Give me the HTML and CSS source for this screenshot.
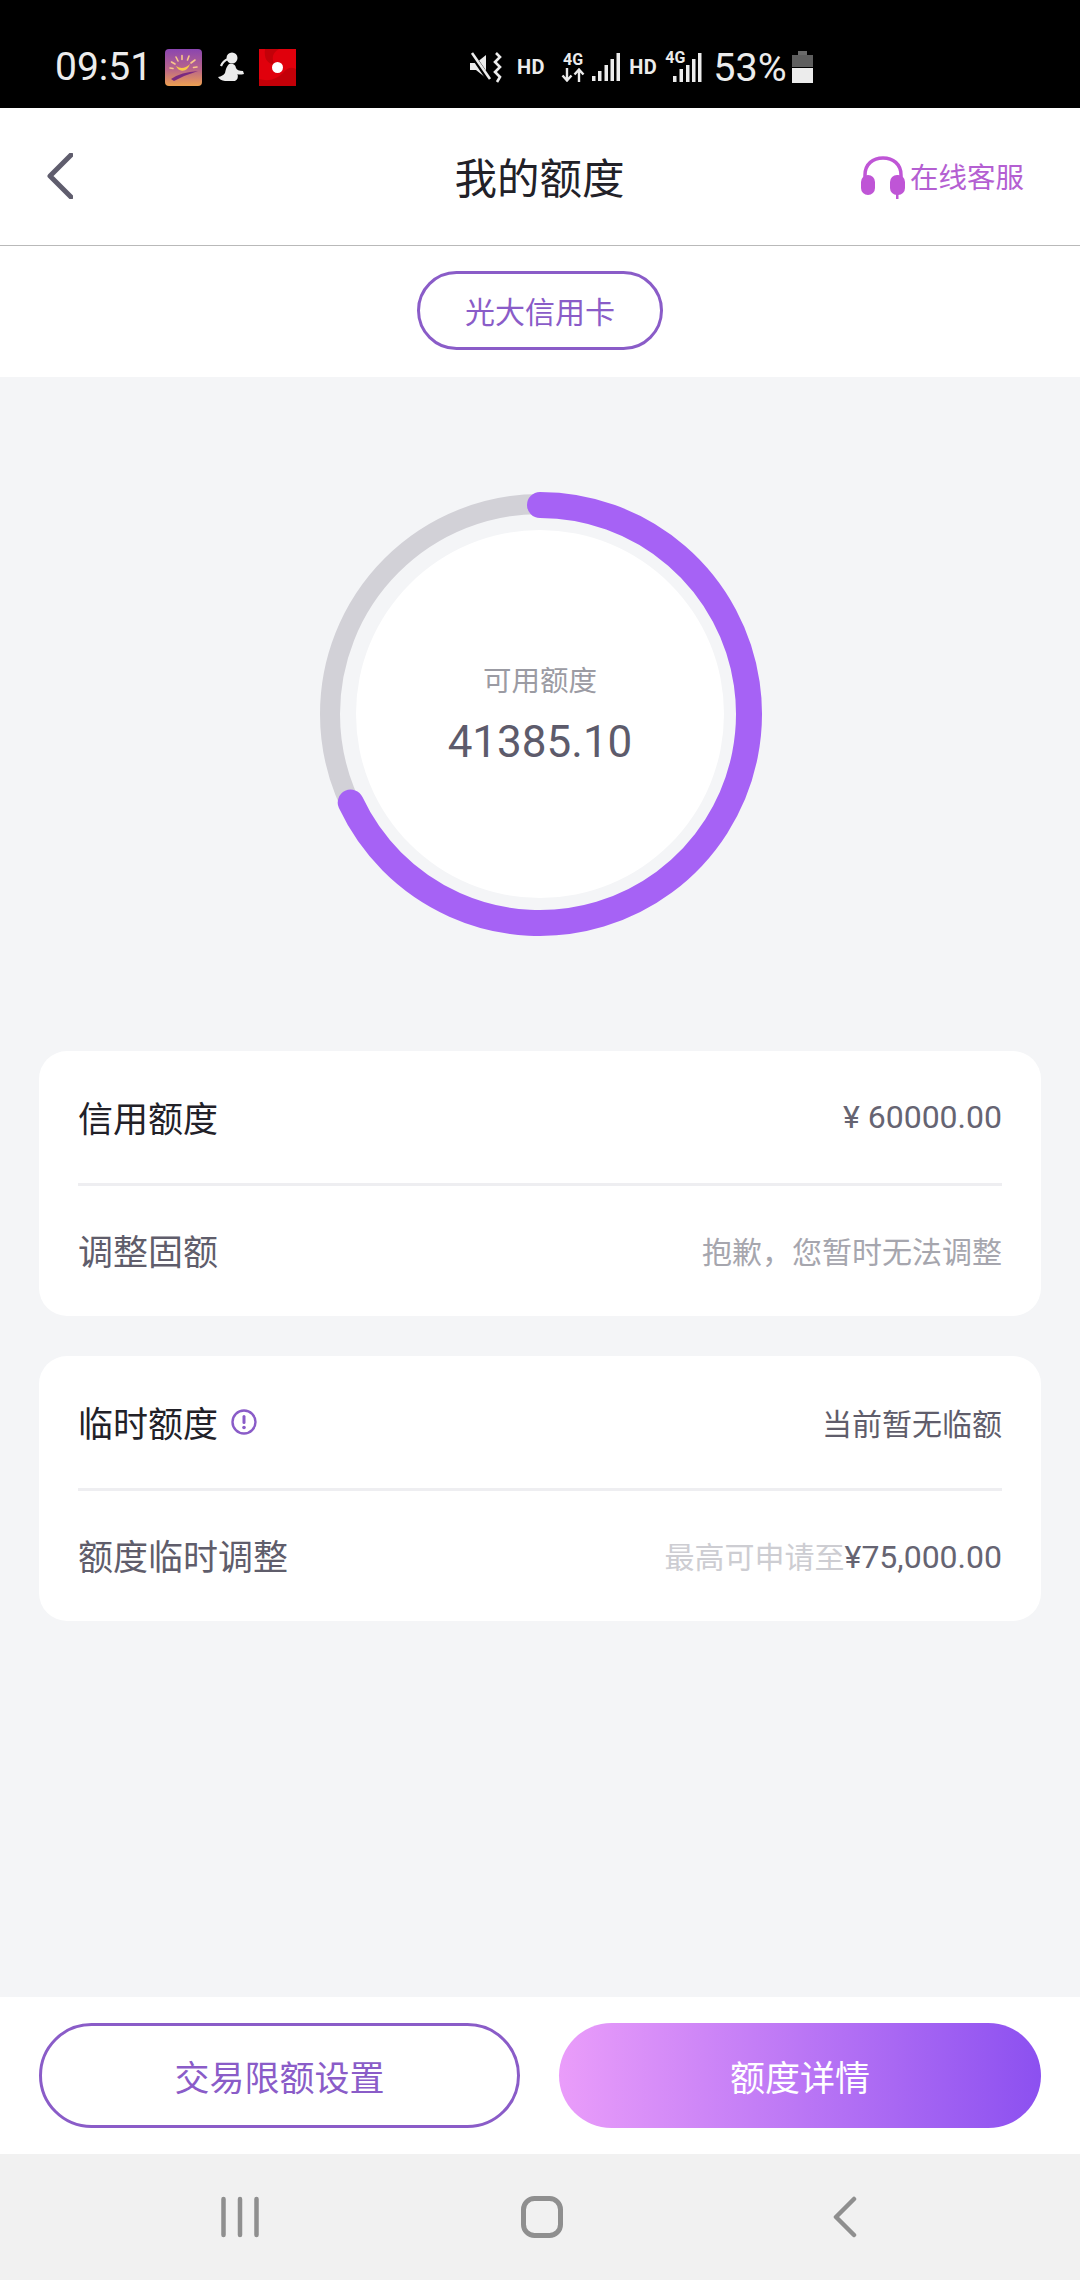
FILE: index.html
```html
<!DOCTYPE html>
<html lang="zh-CN">
<head>
  <meta charset="UTF-8" />
  <meta name="viewport" content="width=device-width, initial-scale=1.0" />
  <title>我的额度</title>
  <link rel="stylesheet" href="styles.css">
</head>
<body>
  <div class="status-bar">
    <div class="status-left">
      <span class="clock">09:51</span>
      <svg class="app-icon" viewBox="0 0 37 37">
        <defs>
          <linearGradient id="sunset" x1="0" y1="0" x2="0" y2="1">
            <stop offset="0" stop-color="#8a45b0"/>
            <stop offset="0.55" stop-color="#b9658a"/>
            <stop offset="1" stop-color="#eda050"/>
          </linearGradient>
        </defs>
        <rect width="37" height="37" rx="4" fill="url(#sunset)"/>
        <path d="M11 17 Q18 22 25 15 Q22 23 16 21.5 Q13 21 11 17Z" fill="#f8c94a"/>
        <path d="M6 30 Q16 23 33 22 Q20 26 9 32Z" fill="#7a2a80"/>
        <g stroke="#f9c78a" stroke-width="1.6" stroke-linecap="round">
          <path d="M17 6.500V10.500M11 8L13 12M24 7L22.500 11M6.500 13L10 15M30 11L26 14M5 19L8 19.500M32 18L28.500 18.500"/>
        </g>
      </svg>
      <svg class="runner-icon" viewBox="0 0 26 30">
        <circle cx="14" cy="6" r="5.500" fill="#ececec"/>
        <path d="M10 7 Q5 9 3 14" stroke="#ececec" stroke-width="2.200" fill="none"/>
        <path d="M11 12 Q17 11 18 16 Q19 19 25 19 L26 22 Q21 23 19.500 22 Q21 27 17 29 L7 29 Q2 28.500 0 25 Q5 24 7 21 Q8 15 11 12Z" fill="#ececec"/>
      </svg>
      <svg class="app-icon" viewBox="0 0 37 37">
        <rect width="37" height="37" fill="#e0000c"/>
        <path d="M0 30 Q14 34 24 24 Q30 16 37 20 V37 H0Z" fill="#c30008"/>
        <path d="M6 0 Q4 14 16 16 Q10 6 20 0Z" fill="#c30008"/>
        <circle cx="18.500" cy="18.500" r="5.500" fill="#fff"/>
      </svg>
    </div>
    <div class="status-right">
      <svg class="mute-icon" viewBox="0 0 32 31">
        <path d="M0 11H6L16 3V26L6 18H0Z" fill="#ececec"/>
        <path d="M1 1L20 29" stroke="#000" stroke-width="5"/>
        <path d="M2 1L20 27" stroke="#ececec" stroke-width="2.600"/>
        <path d="M26 1 L30 5 L25 10 L30 15 L25 20 L30 25 L27 30" stroke="#ececec" stroke-width="2.600" fill="none"/>
      </svg>
      <span class="hd first-hd">HD</span>
      <span class="net">
        <span class="net-label">4G</span>
        <svg class="net-arrows" viewBox="0 0 24 14">
          <path d="M6 0V12M1.500 7.500L6 12.500L10.500 7.500M18 14V2M13.500 6.500L18 1.500L22.500 6.500" stroke="#ececec" stroke-width="2.400" fill="none"/>
        </svg>
      </span>
      <svg class="signal" viewBox="0 0 28 28">
        <rect x="0" y="23" width="3.500" height="5" fill="#ececec"/>
        <rect x="6" y="18" width="3.500" height="10" fill="#ececec"/>
        <rect x="12.500" y="12" width="3.500" height="16" fill="#ececec"/>
        <rect x="18.500" y="6" width="3.500" height="22" fill="#ececec"/>
        <rect x="24.500" y="0" width="3.500" height="28" fill="#ececec"/>
      </svg>
      <span class="hd second-hd">HD</span>
      <span class="net-signal">
        <span class="net-label tiny">4G</span>
        <svg class="signal wide" viewBox="0 0 37 30">
          <rect x="8" y="24" width="3.500" height="6" fill="#ececec"/>
          <rect x="14.500" y="17" width="3.500" height="13" fill="#ececec"/>
          <rect x="21" y="13" width="3.500" height="17" fill="#ececec"/>
          <rect x="27" y="7" width="3.500" height="23" fill="#ececec"/>
          <rect x="33" y="1" width="3.500" height="29" fill="#ececec"/>
        </svg>
      </span>
      <span class="battery-text">53%</span>
      <svg class="battery" viewBox="0 0 21 32">
        <rect x="6" y="0" width="9" height="4" fill="#6a6a6a"/>
        <rect x="0" y="4" width="21" height="12" fill="#5e5e5e"/>
        <rect x="0" y="17" width="21" height="15" fill="#ececec"/>
      </svg>
    </div>
  </div>

  <header class="app-header">
    <svg class="back-icon" viewBox="0 0 26 46">
      <path d="M24 2L3 23L24 44" stroke="#5f5d6d" stroke-width="5" fill="none" stroke-linecap="round" stroke-linejoin="round"/>
    </svg>
    <h1 class="page-title">我的额度</h1>
    <div class="service">
      <svg class="headset" viewBox="0 0 46 44">
        <path d="M5 24V20C5 9 13 3 23 3C33 3 41 9 41 20V24" stroke="#bf55d6" stroke-width="3.500" fill="none"/>
        <rect x="1" y="20" width="14" height="20" rx="7" fill="#bf55d6"/>
        <rect x="30" y="20" width="15" height="20" rx="7" fill="#bf55d6"/>
        <rect x="36" y="38" width="2.500" height="6" fill="#bf55d6"/>
      </svg>
      <span>在线客服</span>
    </div>
  </header>

  <div class="card-tabs">
    <span class="card-pill">光大信用卡</span>
  </div>

  <main class="content">
    <div class="gauge">
      <svg class="gauge-ring" viewBox="0 0 446 446">
        <circle cx="223" cy="223" r="210" fill="none" stroke="#d2d1d7" stroke-width="20"/>
        <circle cx="223" cy="223" r="184" fill="#fff"/>
        <path d="M223 14 A209 209 0 1 1 33.700 311.600" fill="none" stroke="#a662f5" stroke-width="26" stroke-linecap="round"/>
      </svg>
      <div class="gauge-text">
        <span class="gauge-label">可用额度</span>
        <span class="gauge-value">41385.10</span>
      </div>
    </div>

    <section class="panel">
      <div class="row">
        <span class="row-title">信用额度</span>
        <span class="row-amount">¥ 60000.00</span>
      </div>
      <div class="row">
        <span class="row-title soft">调整固额</span>
        <span class="row-note">抱歉，您暂时无法调整</span>
      </div>
    </section>

    <section class="panel">
      <div class="row">
        <span class="row-title">临时额度
          <svg class="info-icon" viewBox="0 0 26 26">
            <circle cx="13" cy="13" r="11.500" stroke="#8a5cc8" stroke-width="2.400" fill="none"/>
            <rect x="11.500" y="6" width="3" height="9" rx="1.500" fill="#8a5cc8"/>
            <circle cx="13" cy="18.500" r="1.800" fill="#8a5cc8"/>
          </svg>
        </span>
        <span class="row-status">当前暂无临额</span>
      </div>
      <div class="row">
        <span class="row-title soft">额度临时调整</span>
        <span class="row-limit">最高可申请至<b>¥75,000.00</b></span>
      </div>
    </section>
  </main>

  <footer class="actions">
    <button class="btn btn-outline">交易限额设置</button>
    <button class="btn btn-fill">额度详情</button>
  </footer>

  <nav class="nav-bar">
    <svg class="nav-recent" viewBox="0 0 38 42">
      <path d="M2.500 3V39M19 3V39M35.500 3V39" stroke="#8f8f8f" stroke-width="4.500" stroke-linecap="round"/>
    </svg>
    <svg class="nav-home" viewBox="0 0 42 42">
      <rect x="2.500" y="2.500" width="37" height="37" rx="11" stroke="#8f8f8f" stroke-width="5" fill="none"/>
    </svg>
    <svg class="nav-back" viewBox="0 0 24 42">
      <path d="M21 3L3 21L21 39" stroke="#8f8f8f" stroke-width="4.500" fill="none" stroke-linecap="round" stroke-linejoin="round"/>
    </svg>
  </nav>
</body>
</html>
```

FILE: styles.css
```css
* {
  margin: 0;
  padding: 0;
  box-sizing: border-box;
}

body {
  width: 1080px;
  height: 2280px;
  display: flex;
  flex-direction: column;
  overflow: hidden;
  background: #f4f5f7;
  font-family: "Noto Sans CJK SC", "Noto Sans", sans-serif;
  font-weight: 400;
}

svg {
  display: block;
  flex-shrink: 0;
}

/* status bar */
.status-bar {
  height: 108px;
  background: #000;
  color: #ececec;
  display: flex;
  align-items: center;
  padding: 26px 0 0 55px;
  font-family: Roboto, sans-serif;
}

.status-left {
  display: flex;
  align-items: center;
  width: 415px;
}

.clock {
  font-size: 39px;
  width: 110px;
  font-weight: 400;
}

.app-icon {
  width: 37px;
  height: 37px;
}

.runner-icon {
  width: 26px;
  height: 30px;
  margin: 0 15px 0 16px;
}

.status-right {
  display: flex;
  align-items: center;
}

.mute-icon {
  width: 32px;
  height: 31px;
}

.hd {
  font-size: 20px;
  font-weight: 700;
  letter-spacing: 0.5px;
}

.first-hd {
  margin: 0 16px 0 15px;
}

.second-hd {
  margin: 0 8px 0 9px;
}

.net {
  display: flex;
  flex-direction: column;
  align-items: center;
  width: 24px;
  margin-right: 7px;
  gap: 1px;
}

.net-label {
  font-size: 16px;
  font-weight: 700;
  line-height: 14px;
}

.net-arrows {
  width: 24px;
  height: 14px;
}

.signal {
  width: 28px;
  height: 28px;
}

.net-signal {
  display: flex;
  position: relative;
  width: 37px;
  height: 30px;
}

.signal.wide {
  width: 37px;
  height: 30px;
}

.net-label.tiny {
  position: absolute;
  left: 0;
  top: -1px;
}

.battery-text {
  font-size: 39.500px;
  font-weight: 400;
  margin: 0 5px 0 11px;
}

.battery {
  width: 21px;
  height: 32px;
}

/* header */
.app-header {
  height: 138px;
  background: #fff;
  border-bottom: 1px solid #b9b9b9;
  display: flex;
  align-items: center;
  padding: 0 56px 0 47px;
}

.back-icon {
  width: 26px;
  height: 46px;
  margin-top: -2px;
}

.page-title {
  flex: 1;
  text-align: center;
  font-size: 42.500px;
  font-weight: 400;
  color: #222128;
  padding-left: 146px;
  margin-top: -2px;
}

.service {
  display: flex;
  align-items: center;
  font-size: 28.500px;
  color: #b45fd2;
  gap: 4px;
}

.service span {
  margin-top: -2px;
}

.headset {
  width: 46px;
  height: 44px;
}

.card-tabs {
  height: 131px;
  background: #fff;
  display: flex;
  justify-content: center;
  align-items: center;
  padding-bottom: 3px;
}

.card-pill {
  width: 246px;
  height: 79px;
  border: 3px solid #8a5cc8;
  border-radius: 40px;
  font-size: 30px;
  color: #8a5cc8;
  display: flex;
  align-items: center;
  justify-content: center;
}

/* main */
.content {
  flex: 1;
  padding: 0 39px;
}

.gauge {
  display: grid;
  justify-content: center;
  align-items: center;
  padding-top: 114px;
  margin-bottom: 114px;
}

.gauge-ring {
  grid-area: 1 / 1;
  width: 446px;
  height: 446px;
}

.gauge-text {
  grid-area: 1 / 1;
  display: flex;
  flex-direction: column;
  align-items: center;
}

.gauge-label {
  font-size: 28.500px;
  color: #9b9ba3;
  line-height: 40px;
  margin-top: -2px;
}

.gauge-value {
  font-family: Roboto, sans-serif;
  font-weight: 400;
  font-size: 44px;
  color: #5d5b6b;
  line-height: 52px;
  margin-top: 17px;
}

.panel {
  background: #fff;
  border-radius: 28px;
  padding: 0 39px;
  margin-bottom: 40px;
}

.row {
  height: 132px;
  display: flex;
  justify-content: space-between;
  align-items: center;
  padding-bottom: 1px;
}

.row + .row {
  height: 133px;
  padding-bottom: 3px;
  border-top: 3px solid #eeeef1;
}

.row-title {
  font-size: 35px;
  color: #222128;
  display: flex;
  align-items: center;
  gap: 13px;
}

.row-title.soft {
  color: #5f5d6b;
}

.info-icon {
  width: 26px;
  height: 26px;
}

.row-amount {
  font-family: Roboto, sans-serif;
  font-weight: 400;
  font-size: 32px;
  color: #666472;
}

.row-note {
  font-size: 30px;
  color: #a6a6ae;
}

.row-status {
  font-size: 30px;
  color: #5f5d6b;
}

.row-limit {
  font-size: 30px;
  color: #cdcdd2;
}

.row-limit b {
  font-family: Roboto, sans-serif;
  font-weight: 400;
  font-size: 32px;
  color: #666472;
}

/* bottom */
.actions {
  height: 157px;
  background: #fff;
  display: flex;
  justify-content: space-between;
  padding: 26px 39px 0;
}

.btn {
  height: 105px;
  border-radius: 53px;
  font-family: inherit;
  font-weight: 400;
  font-size: 35px;
}

.btn-outline {
  width: 481px;
  background: #fff;
  border: 3px solid #8a5cc8;
  color: #8a5cc8;
}

.btn-fill {
  width: 482px;
  border: none;
  color: #fff;
  background: linear-gradient(90deg, #ea9dfa, #8c50f0);
}

.nav-bar {
  height: 126px;
  background: #f1f1f1;
  display: flex;
  align-items: center;
  padding: 0 0 0 221px;
}

.nav-recent {
  width: 38px;
  height: 42px;
}

.nav-home {
  width: 42px;
  height: 42px;
  margin: 0 270px 0 262px;
}

.nav-back {
  width: 24px;
  height: 42px;
}
```
